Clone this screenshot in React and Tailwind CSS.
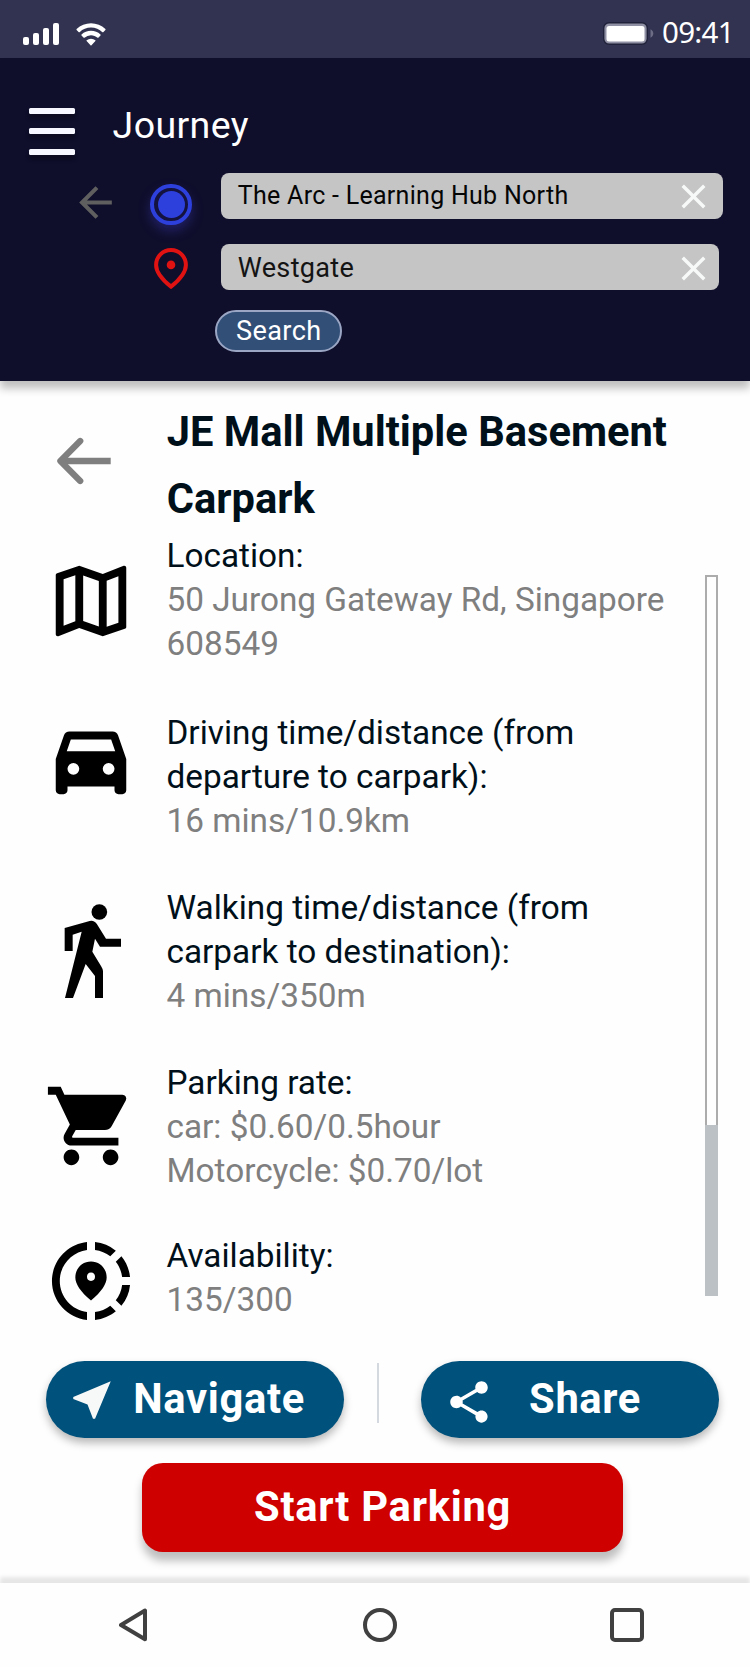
import React from "react";
import { MdArrowBack, MdClose, MdOutlineMap, MdShoppingCart, MdShareLocation, MdNearMe, MdShare } from "react-icons/md";

function StatusBar() {
  return (
    <div className="flex h-[58px] items-start bg-[#313350] pl-[23px] text-white">
      <div className="mt-[23px] flex h-[22px] w-[36px] items-end justify-between">
        <span className="h-[8.5px] w-[6.2px] rounded-[2px] bg-white" />
        <span className="h-[12.5px] w-[6.2px] rounded-[2px] bg-white" />
        <span className="h-[17px] w-[6.2px] rounded-[2px] bg-white" />
        <span className="h-[22px] w-[6.2px] rounded-[2px] bg-white" />
      </div>
      <svg className="mt-[23px] ml-[16px] h-[23px] w-[32px]" viewBox="0 0 32 23" fill="#fff">
        <path d="M16 4.6c4.4 0 8.4 1.7 11.4 4.6.3.2.6.2.8 0l2.2-2.3c.2-.2.2-.6 0-.9a20.8 20.8 0 0 0-28.8 0c-.2.3-.2.7 0 .9l2.2 2.3c.2.2.5.2.8 0A16.5 16.5 0 0 1 16 4.6Z" />
        <path d="M16 12.2c2.4 0 4.7.9 6.5 2.5.2.2.6.2.8 0l2.2-2.3c.2-.2.2-.6 0-.9a13.9 13.9 0 0 0-19 0c-.2.3-.2.7 0 .9l2.2 2.3c.2.2.6.2.8 0A9.6 9.6 0 0 1 16 12.2Z" />
        <path d="M20.4 17.3c.2.2.2.6 0 .8l-3.9 4.2c-.3.3-.7.3-1 0l-3.9-4.2c-.2-.2-.2-.6 0-.8a6.7 6.7 0 0 1 8.8 0Z" />
      </svg>
      <svg className="mt-[22px] ml-[496px] h-[23px] w-[51px]" viewBox="0 0 51 23">
        <rect x="0.7" y="0.7" width="43.6" height="21.6" rx="5.5" fill="#8f90a3" stroke="#20213a" strokeWidth="1.4" />
        <rect x="3.5" y="4" width="38" height="15.5" rx="2.5" fill="#fff" />
        <path d="M47.5 7.3v8.4c1.7-.7 2.8-2.4 2.8-4.2s-1.1-3.5-2.8-4.2" fill="#6d6e86" />
      </svg>
      <span className="mt-[12px] ml-[8px] font-['Noto_Sans'] text-[29.5px] leading-[40px] tracking-[-0.7px]">09:41</span>
    </div>
  );
}

function Header() {
  return (
    <header className="relative z-10 h-[323px] bg-[#0f0e2b] pt-[44.5px] shadow-[0_8.3px_8.3px_rgba(0,0,0,0.25)]">
      <div className="flex h-[70.5px] items-start pl-[29px]">
        <button className="mt-[5.5px] flex h-[46.5px] w-[46px] flex-col justify-between">
          <span className="h-[5.7px] w-full rounded-[1.5px] bg-[#f7f7ff] shadow-[0_4px_4px_rgba(0,0,0,0.3)]" />
          <span className="h-[5.7px] w-full rounded-[1.5px] bg-[#f7f7ff] shadow-[0_4px_4px_rgba(0,0,0,0.3)]" />
          <span className="h-[5.7px] w-full rounded-[1.5px] bg-[#f7f7ff] shadow-[0_4px_4px_rgba(0,0,0,0.3)]" />
        </button>
        <h1 className="ml-[37.6px] text-[37.5px] leading-[44px] tracking-[0.38px] text-white">Journey</h1>
      </div>
      <div className="flex items-start pl-[71px]">
        <MdArrowBack className="mt-[4.5px] size-[49px] text-[#5f5f5f]" />
        <div className="ml-[21px] flex w-[60px] flex-col items-center pt-[10.6px]">
          <div className="flex size-[41.5px] items-center justify-center rounded-full border-4 border-[#2d40dc] bg-[#14133f] shadow-[0_6px_12px_rgba(60,60,190,0.4)]">
            <span className="size-[27px] rounded-full bg-[#2d40dc]" />
          </div>
          <svg className="mt-[22.9px] h-[41.5px] w-[34px]" viewBox="0 0 34 41.5" fill="none">
            <path d="M17 38.6C10 33 2.1 25 2.1 16.9a14.9 14.9 0 0 1 29.8 0C31.9 25 24 33 17 38.6Z" stroke="#e01212" strokeWidth="4" />
            <circle cx="17" cy="16.9" r="4.3" fill="#e01212" />
          </svg>
        </div>
        <div className="ml-[20px] flex flex-col items-start">
          <div className="flex h-[46px] w-[502px] items-center justify-between rounded-lg bg-[#c5c5c5] pr-[8.8px] pl-[16.8px]">
            <span className="-mt-px text-[25px] leading-[30px] tracking-[0.28px] text-[#050505]">The Arc - Learning Hub North</span>
            <MdClose className="size-[41px] text-[#f7f9f9]" />
          </div>
          <div className="mt-[25px] flex h-[46px] w-[498px] items-center justify-between rounded-lg bg-[#c5c5c5] pr-[4.8px] pl-[16.8px]">
            <span className="mt-[1.5px] text-[27.08px] leading-[32px] tracking-[0.3px] text-[#141414]">Westgate</span>
            <MdClose className="mt-[3.5px] size-[41px] text-[#f7f9f9]" />
          </div>
          <button className="mt-[20px] -ml-[6.5px] flex h-[42px] w-[127.5px] items-center rounded-full border-2 border-[#9aa6c4] bg-[#324f78] pl-[19.5px] text-[27.08px] leading-[32px] tracking-[0.4px] text-white">
            Search
          </button>
        </div>
      </div>
    </header>
  );
}

function CarIcon() {
  return (
    <svg className="mt-[1.6px] size-[94px]" viewBox="0 0 24 24">
      <path
        fillRule="evenodd"
        d="M18.92 6.01C18.72 5.42 18.16 5 17.5 5h-11c-.66 0-1.21.42-1.42 1.01L3 12v8c0 .55.45 1 1 1h1c.55 0 1-.45 1-1v-1h12v1c0 .55.45 1 1 1h1c.55 0 1-.45 1-1v-8l-2.08-5.99ZM6.85 7h10.29l1.04 3H5.81l1.04-3ZM7.5 16a1.5 1.5 0 1 1 0-3 1.5 1.5 0 0 1 0 3Zm9 0a1.5 1.5 0 1 1 0-3 1.5 1.5 0 0 1 0 3Z"
      />
    </svg>
  );
}

function WalkIcon() {
  return (
    <svg className="mt-[15.4px] h-[100px] w-[94px]" viewBox="131 633 282 300">
      <circle cx="297" cy="666" r="23.5" />
      <path d="M193 714L268 693Q282 690 290 703L317 746H362V770H299L284 746L276 785L302 828Q308 838 308 843V924H284V858L256 822L218 924H194L244 725L217 734V783H193Z" />
    </svg>
  );
}

function InfoRow({ height, icon, label, value }) {
  return (
    <div className={`flex items-start pl-[43.5px] ${height}`}>
      <div className="w-[123px] shrink-0">{icon}</div>
      <div className="pt-[0.5px] text-[33.33px] leading-[43.75px] whitespace-nowrap">
        {label.map((line) => (
          <div key={line} className="text-[#00101a]">{line}</div>
        ))}
        {value.map((line) => (
          <div key={line} className="text-[#7f7f7f]">{line}</div>
        ))}
      </div>
    </div>
  );
}

function Details() {
  return (
    <div className="flex h-[979.5px] items-start pt-[17.5px]">
      <div className="w-[705px]">
        <div className="flex h-[135px] items-start pl-[57px]">
          <svg className="mt-[38px] h-[48px] w-[54px]" viewBox="0 0 54 48" fill="none" stroke="#7f7f7f" strokeWidth="6.3">
            <path d="M3.5 24H53.7" />
            <path d="M23.2 4L3.4 24L23.2 44" strokeLinecap="round" strokeLinejoin="round" />
          </svg>
          <h2 className="ml-[55.7px] pt-[0.6px] text-[41.67px] leading-[66.67px] font-bold whitespace-nowrap text-[#00101a]">
            JE Mall Multiple Basement
            <br />
            Carpark
          </h2>
        </div>
        <InfoRow
          height="h-[177.3px]"
          icon={<MdOutlineMap className="mt-[20.8px] size-[94px]" />}
          label={["Location:"]}
          value={["50 Jurong Gateway Rd, Singapore", "608549"]}
        />
        <InfoRow
          height="h-[174.8px]"
          icon={<CarIcon />}
          label={["Driving time/distance (from", "departure to carpark):"]}
          value={["16 mins/10.9km"]}
        />
        <InfoRow
          height="h-[175.2px]"
          icon={<WalkIcon />}
          label={["Walking time/distance (from", "carpark to destination):"]}
          value={["4 mins/350m"]}
        />
        <InfoRow
          height="h-[173px]"
          icon={<MdShoppingCart className="mt-[18.7px] size-[94px]" />}
          label={["Parking rate:"]}
          value={["car: $0.60/0.5hour", "Motorcycle: $0.70/lot"]}
        />
        <InfoRow
          height="h-[126px]"
          icon={<MdShareLocation className="size-[94px]" />}
          label={["Availability:"]}
          value={["135/300"]}
        />
      </div>
      <div className="mt-[176.5px] flex h-[721px] w-[13px] flex-col">
        <div className="flex-1 border-2 border-b-0 border-[#acacac]" />
        <div className="h-[171px] bg-[#bcc1c5]" />
      </div>
    </div>
  );
}

function Actions() {
  return (
    <div className="flex flex-col items-start pl-[46px] font-bold text-white">
      <div className="flex items-start">
        <button className="flex h-[77px] w-[298px] items-start rounded-full bg-[#00517b] pl-[20.7px] text-[41.67px] leading-[50px] tracking-[0.69px] shadow-[0_5px_8px_rgba(0,0,0,0.28)]">
          <MdNearMe className="mt-[14.9px] size-[50px] text-[#f7f9f9]" />
          <span className="mt-[13px] ml-[16.5px]">Navigate</span>
        </button>
        <div className="mt-[2.5px] ml-[33px] h-[60px] w-[2px] bg-[#d3d9df]" />
        <button className="ml-[42px] flex h-[77px] w-[298px] items-start rounded-full bg-[#00517b] pl-[22.7px] text-[41.67px] leading-[50px] tracking-[0.65px] shadow-[0_5px_8px_rgba(0,0,0,0.28)]">
          <MdShare className="mt-[16.7px] size-[50px]" />
          <span className="mt-[13px] ml-[35.4px]">Share</span>
        </button>
      </div>
      <button className="mt-[25.5px] ml-[95.7px] flex h-[89px] w-[481.3px] items-start rounded-[21px] bg-[#cf0000] pt-[19px] pl-[112.3px] text-[41.67px] leading-[50px] tracking-[0.75px] shadow-[0_8.3px_8.3px_rgba(0,0,0,0.25)]">
        Start Parking
      </button>
    </div>
  );
}

function NavBar() {
  return (
    <nav className="relative flex h-[84px] items-start bg-[#fefefe] pt-[25px] pl-[119px] shadow-[0_-6px_4px_rgba(0,0,0,0.095)]">
      <svg className="h-[34px] w-[29px]" viewBox="0 0 29 34" fill="none" stroke="#404040" strokeWidth="4" strokeLinejoin="round">
        <path d="M2 17L26 2.5V31.2Z" />
      </svg>
      <span className="ml-[215px] size-[34px] rounded-full border-4 border-[#404040]" />
      <span className="ml-[213px] size-[34px] rounded-[5px] border-4 border-[#404040]" />
    </nav>
  );
}

export default function App() {
  return (
    <div className="h-[1667px] w-[750px] overflow-hidden bg-[#fefefe] font-[Roboto,sans-serif]">
      <StatusBar />
      <Header />
      <main className="h-[1202px]">
        <Details />
        <Actions />
      </main>
      <NavBar />
    </div>
  );
}
